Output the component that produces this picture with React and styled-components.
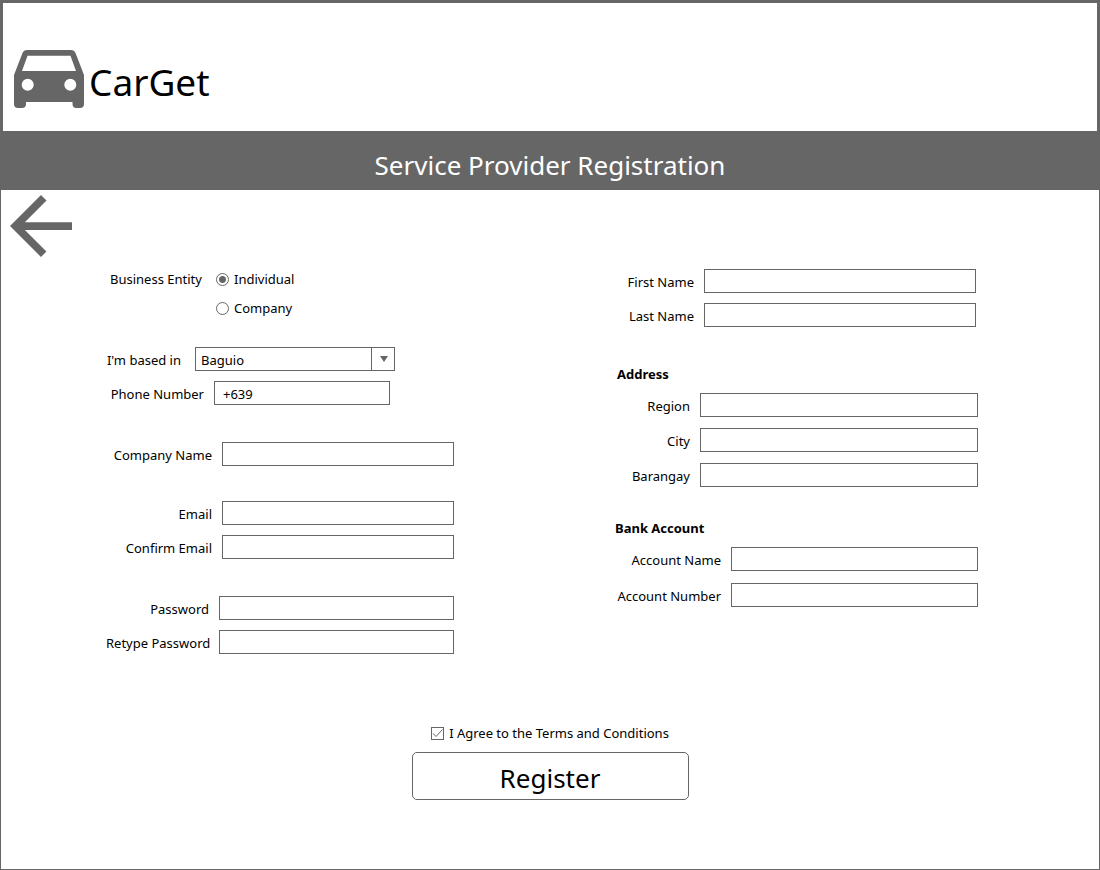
import React from "react";
import styled, { createGlobalStyle } from "styled-components";

const ink = "#666666";

const GlobalStyle = createGlobalStyle`
  *, *::before, *::after { box-sizing: border-box; }
  body { margin: 0; background: #fff; }
  body, input, select, button {
    font-family: "Segoe UI", "Noto Sans", "Open Sans", sans-serif;
    font-size: 13px;
    line-height: 20px;
    color: #000;
  }
`;

const Page = styled.div`
  display: flex;
  flex-direction: column;
  min-height: 100vh;
  border: 1px solid ${ink};
`;

const Header = styled.header`
  display: flex;
  align-items: center;
  gap: 5px;
  padding: 47px 11px 23px;
  border: 2px solid ${ink};
  border-bottom: 0;
`;

const CarIcon = styled.svg`
  width: 70px;
  height: 58px;
  fill: ${ink};
`;

const Brand = styled.span`
  padding-top: 6px;
  font-size: 37px;
  line-height: 52px;
`;

const Banner = styled.div`
  padding: 14px 16px 5px;
  background: ${ink};
  text-align: center;
`;

const Title = styled.h1`
  margin: 0;
  color: #fff;
  font-size: 26px;
  font-weight: 400;
  line-height: 40px;
`;

const BackLink = styled.a`
  align-self: flex-start;
  margin: 5px 9px 0;
  line-height: 0;
`;

const BackIcon = styled.svg`
  width: 62px;
  height: 62px;
  fill: ${ink};
`;

const Form = styled.form`
  display: flex;
  flex-direction: column;
  padding: 10px 0 24px;
`;

const Columns = styled.div`
  display: grid;
  grid-template-columns: minmax(0, 348fr) minmax(0, 363fr);
  column-gap: 161px;
  padding: 0 121px 0 105px;
`;

const Column = styled.div`
  display: flex;
  flex-direction: column;
  padding-top: ${(p) => p.$top || 0}px;
`;

const Group = styled.div`
  display: flex;
  flex-direction: column;
  gap: ${(p) => p.$gap || 10}px;
  margin-bottom: ${(p) => p.$after || 37}px;
  padding-right: ${(p) => p.$inset || 0}px;
`;

const Row = styled.div`
  display: flex;
  align-items: center;
  gap: ${(p) => p.$gap || 10}px;
`;

const Label = styled.label`
  flex: none;
  width: ${(p) => p.$width}px;
  padding-top: 2px;
  text-align: right;
  white-space: nowrap;
`;

const TextBox = styled.input`
  flex: ${(p) => (p.$width ? "none" : "1")};
  width: ${(p) => (p.$width ? `${p.$width}px` : "auto")};
  min-width: 0;
  height: 24px;
  padding: 2px 8px 0;
  border: 1px solid ${ink};
  border-radius: 0;
  background: #fff;
  outline-color: ${ink};
`;

const Entity = styled.div`
  display: flex;
  gap: 15px;
  margin-bottom: 27px;
  padding-left: 4px;
`;

const EntityLabel = styled.span`
  width: 91px;
  line-height: 24px;
  white-space: nowrap;
`;

const Options = styled.div`
  display: flex;
  flex-direction: column;
  gap: 5px;
`;

const Option = styled.label`
  display: flex;
  align-items: center;
  gap: 5px;
  line-height: 24px;
`;

const Radio = styled.input`
  appearance: none;
  width: 13px;
  height: 13px;
  margin: 0;
  border: 1px solid ${ink};
  border-radius: 50%;
  background: #fff;

  &:checked {
    background: radial-gradient(circle, ${ink} 3px, #fff 4px);
  }
`;

const SelectFrame = styled.div`
  position: relative;
  width: 200px;
  height: 24px;
`;

const Select = styled.select`
  appearance: none;
  width: 100%;
  height: 24px;
  padding: 2px 28px 0 5px;
  border: 1px solid ${ink};
  border-radius: 0;
  background: #fff;
  outline-color: ${ink};
`;

const SelectArrow = styled.span`
  position: absolute;
  top: 0;
  right: 0;
  display: flex;
  align-items: center;
  justify-content: center;
  width: 24px;
  height: 24px;
  border-left: 1px solid ${ink};
  pointer-events: none;
`;

const Heading = styled.h2`
  margin: 0 0 9px ${(p) => p.$indent || 0}px;
  font-size: 13px;
  font-weight: 700;
  line-height: 20px;
`;

const Footer = styled.div`
  display: flex;
  flex-direction: column;
  align-items: center;
  gap: 9px;
  margin-top: 32px;
`;

const Agree = styled.label`
  display: flex;
  align-items: center;
  gap: 5px;
`;

const Tick = styled.span`
  position: relative;
  width: 13px;
  height: 13px;

  svg {
    position: absolute;
    inset: 0;
    fill: none;
    stroke: ${ink};
    pointer-events: none;
    visibility: hidden;
  }

  input:checked + svg {
    visibility: visible;
  }
`;

const CheckBox = styled.input`
  appearance: none;
  display: block;
  width: 13px;
  height: 13px;
  margin: 0;
  border: 1px solid ${ink};
  background: #fff;
`;

const Submit = styled.button`
  width: 277px;
  height: 48px;
  padding: 3px 16px 0;
  border: 1px solid ${ink};
  border-radius: 5px;
  background: #fff;
  font-size: 26px;
  line-height: 40px;
`;

function Field({ id, label, width, type = "text" }) {
  return (
    <Row>
      <Label htmlFor={id} $width={width}>{label}</Label>
      <TextBox id={id} name={id} type={type} />
    </Row>
  );
}

export default function App() {
  return (
    <>
      <GlobalStyle />
      <Page>
        <Header>
          <CarIcon viewBox="0 0 70 58" aria-hidden="true">
            <path
              fillRule="evenodd"
              d="M13 0H57Q60.300 0 61.500 3L70 25V54Q70 58 66 58H62.500Q58.500 58 58.500 54V52H12V54Q12 58 8 58H4Q0 58 0 54V25L8.500 3Q9.700 0 13 0ZM13.500 5.700L8 21H62L56.500 5.700ZM13.700 28.700A6 6 0 1 0 13.700 40.700A6 6 0 1 0 13.700 28.700ZM56.300 28.700A6 6 0 1 0 56.300 40.700A6 6 0 1 0 56.300 28.700Z"
            />
          </CarIcon>
          <Brand>CarGet</Brand>
        </Header>
        <Banner>
          <Title>Service Provider Registration</Title>
        </Banner>
        <BackLink href="#" aria-label="Back">
          <BackIcon viewBox="4 4 16 16">
            <path d="M20 11H7.830l5.590-5.590L12 4l-8 8 8 8 1.410-1.410L7.830 13H20z" />
          </BackIcon>
        </BackLink>
        <Form onSubmit={(e) => e.preventDefault()}>
          <Columns>
            <Column>
              <Entity role="radiogroup" aria-labelledby="entity">
                <EntityLabel id="entity">Business Entity</EntityLabel>
                <Options>
                  <Option>
                    <Radio type="radio" name="entity" value="individual" defaultChecked />
                    Individual
                  </Option>
                  <Option>
                    <Radio type="radio" name="entity" value="company" />
                    Company
                  </Option>
                </Options>
              </Entity>
              <Group>
                <Row $gap={14}>
                  <Label htmlFor="base" $width={75}>I'm based in</Label>
                  <SelectFrame>
                    <Select id="base" name="base" defaultValue="Baguio">
                      <option>Baguio</option>
                    </Select>
                    <SelectArrow>
                      <svg width="8" height="6" viewBox="0 0 8 6" fill={ink} aria-hidden="true">
                        <path d="M0 0H8L4 6Z" />
                      </svg>
                    </SelectArrow>
                  </SelectFrame>
                </Row>
                <Row>
                  <Label htmlFor="phone" $width={98}>Phone Number</Label>
                  <TextBox id="phone" name="phone" type="tel" defaultValue="+639" $width={176} />
                </Row>
              </Group>
              <Group $after={35}>
                <Field id="companyName" label="Company Name" width={106} />
              </Group>
              <Group>
                <Field id="email" label="Email" width={106} type="email" />
                <Field id="confirmEmail" label="Confirm Email" width={106} type="email" />
              </Group>
              <Group>
                <Field id="password" label="Password" width={103} type="password" />
                <Field id="retypePassword" label="Retype Password" width={103} type="password" />
              </Group>
            </Column>
            <Column $top={2}>
              <Group $inset={2}>
                <Field id="firstName" label="First Name" width={79} />
                <Field id="lastName" label="Last Name" width={79} />
              </Group>
              <Heading $indent={2}>Address</Heading>
              <Group $gap={11} $after={31}>
                <Field id="region" label="Region" width={75} />
                <Field id="city" label="City" width={75} />
                <Field id="barangay" label="Barangay" width={75} />
              </Group>
              <Heading>Bank Account</Heading>
              <Group $gap={12}>
                <Field id="accountName" label="Account Name" width={106} />
                <Field id="accountNumber" label="Account Number" width={106} />
              </Group>
            </Column>
          </Columns>
          <Footer>
            <Agree>
              <Tick>
                <CheckBox type="checkbox" name="agree" defaultChecked />
                <svg width="13" height="13" viewBox="0 0 13 13" aria-hidden="true">
                  <path d="M2 6.500L5 9.500L11.500 2.500" />
                </svg>
              </Tick>
              I Agree to the Terms and Conditions
            </Agree>
            <Submit type="submit">Register</Submit>
          </Footer>
        </Form>
      </Page>
    </>
  );
}
